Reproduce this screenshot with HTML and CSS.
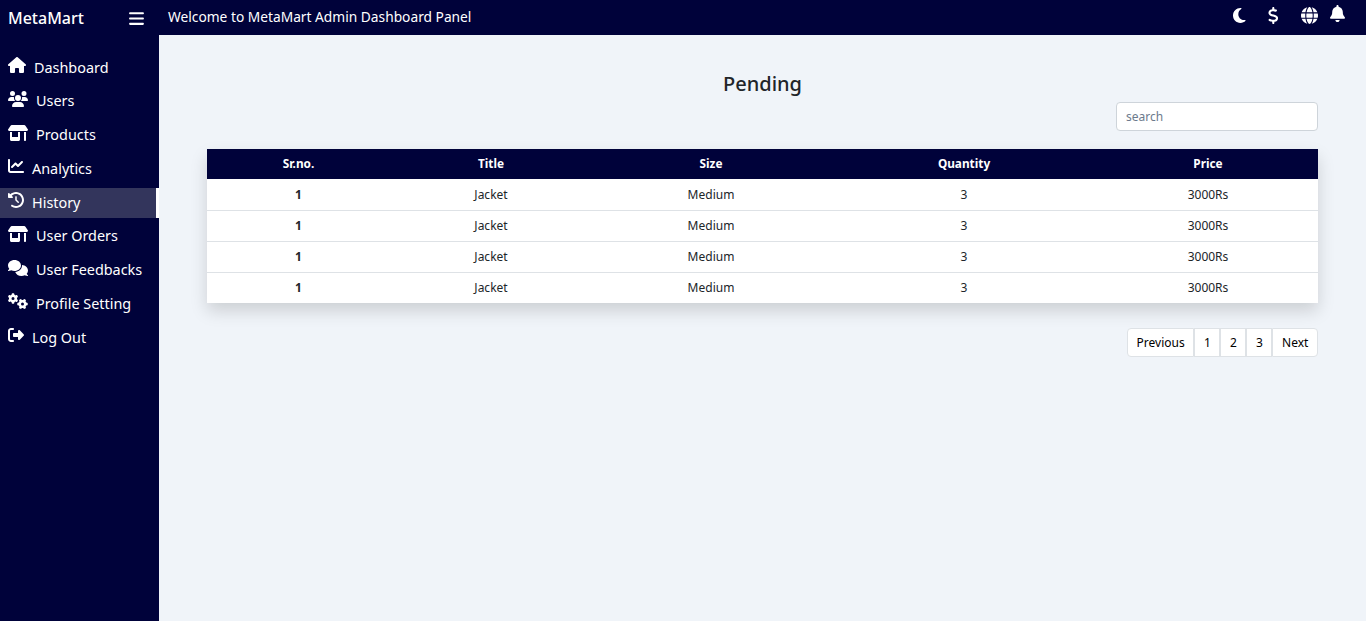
FILE: index.html
```html
<!DOCTYPE html>
<html lang="en">
<head>
  <meta charset="UTF-8">
  <title>MetaMart Admin</title>
  <link rel="stylesheet" href="styles.css">
</head>
<body>
<svg class="defs" aria-hidden="true">
  <symbol id="i-home" viewBox="0 0 576 512"><path d="M575.8 255.5c0 18-15 32.1-32 32.1h-32l.7 160.2c0 2.7-.2 5.4-.5 8.1V472c0 22.1-17.9 40-40 40H456c-1.1 0-2.2 0-3.3-.1c-1.4 .1-2.8 .1-4.2 .1H416 392c-22.1 0-40-17.9-40-40V448 384c0-17.7-14.3-32-32-32H256c-17.7 0-32 14.3-32 32v64 24c0 22.1-17.9 40-40 40H160 128.1c-1.5 0-3-.1-4.5-.2c-1.2 .1-2.4 .2-3.6 .2H104c-22.1 0-40-17.9-40-40V360c0-.9 0-1.9 .1-2.8V287.6H32c-18 0-32-14-32-32.1c0-9 3-17 10-24L266.4 8c7-7 15-8 22-8s15 2 21 7L564.8 231.5c8 7 12 15 11 24z"/></symbol>
  <symbol id="i-users" viewBox="0 0 640 512"><path d="M144 0a80 80 0 1 1 0 160A80 80 0 1 1 144 0zM512 0a80 80 0 1 1 0 160A80 80 0 1 1 512 0zM0 298.7C0 239.8 47.8 192 106.7 192h42.7c15.9 0 31 3.5 44.6 9.7c-1.3 7.2-1.9 14.7-1.9 22.3c0 38.2 16.8 72.5 43.3 96c-.2 0-.4 0-.7 0H21.3C9.6 320 0 310.4 0 298.7zM405.3 320c-.2 0-.4 0-.7 0c26.6-23.5 43.3-57.8 43.3-96c0-7.6-.7-15-1.9-22.3c13.6-6.3 28.7-9.7 44.6-9.7h42.7C592.2 192 640 239.8 640 298.7c0 11.8-9.6 21.3-21.3 21.3H405.3zM224 224a96 96 0 1 1 192 0 96 96 0 1 1 -192 0zM128 485.3C128 411.7 187.7 352 261.3 352H378.7C452.3 352 512 411.7 512 485.3c0 14.7-11.9 26.7-26.7 26.7H154.7c-14.7 0-26.7-11.9-26.7-26.7z"/></symbol>
  <symbol id="i-store" viewBox="0 0 640 512"><path d="M36.8 192H603.2c20.3 0 36.8-16.5 36.8-36.8c0-7.3-2.2-14.4-6.2-20.4L558.2 21.4C549.3 8 534.4 0 518.3 0H121.7c-16 0-31 8-39.9 21.4L6.2 134.7c-4 6.1-6.2 13.2-6.2 20.4C0 175.5 16.5 192 36.8 192zM64 224V384v80c0 26.5 21.5 48 48 48H336c26.5 0 48-21.5 48-48V384 224H320V384H128V224H64zm448 0V480c0 17.7 14.3 32 32 32s32-14.3 32-32V224H512z"/></symbol>
  <symbol id="i-chart" viewBox="0 0 512 512"><path d="M64 64c0-17.7-14.3-32-32-32S0 46.3 0 64V400c0 44.2 35.8 80 80 80H480c17.7 0 32-14.3 32-32s-14.3-32-32-32H80c-8.8 0-16-7.2-16-16V64zm406.6 86.6c12.5-12.5 12.5-32.8 0-45.3s-32.8-12.5-45.3 0L320 210.7l-57.4-57.4c-12.5-12.5-32.8-12.5-45.3 0l-112 112c-12.5 12.5-12.5 32.8 0 45.3s32.8 12.5 45.3 0L240 221.3l57.4 57.4c12.5 12.5 32.8 12.5 45.3 0l128-128z"/></symbol>
  <symbol id="i-history" viewBox="0 0 512 512"><path d="M75 75L41 41C25.9 25.9 0 36.6 0 57.9V168c0 13.3 10.7 24 24 24H134.1c21.4 0 32.1-25.9 17-41l-30.8-30.8C155 85.5 203 64 256 64c106 0 192 86 192 192s-86 192-192 192c-40.8 0-78.6-12.7-109.7-34.4c-14.5-10.1-34.4-6.6-44.6 7.9s-6.6 34.4 7.9 44.6C151.2 495 201.7 512 256 512c141.4 0 256-114.6 256-256S397.4 0 256 0C185.3 0 121.3 28.7 75 75zm181 53c-13.3 0-24 10.7-24 24V256c0 6.4 2.5 12.5 7 17l72 72c9.4 9.4 24.6 9.4 33.9 0s9.4-24.6 0-33.9l-65-65V152c0-13.3-10.7-24-24-24z"/></symbol>
  <symbol id="i-comments" viewBox="0 0 640 512"><path d="M208 352c114.9 0 208-78.8 208-176S322.9 0 208 0S0 78.8 0 176c0 38.6 14.7 74.3 39.6 103.4c-3.5 9.4-8.7 17.7-14.2 24.7c-4.8 6.2-9.7 11-13.3 14.3c-1.8 1.6-3.3 2.9-4.3 3.7c-.5 .4-.9 .7-1.1 .8l-.2 .2 0 0 0 0C1 327.2-1.4 334.4 .8 340.9S9.1 352 16 352c21.8 0 43.8-5.6 62.1-12.5c9.2-3.5 17.8-7.4 25.3-11.4C134.1 343.3 169.8 352 208 352zM448 176c0 112.3-99.1 196.9-216.5 207C255.8 457.4 336.4 512 432 512c38.2 0 73.9-8.7 104.7-23.9c7.5 4 16 7.9 25.2 11.4c18.3 6.9 40.3 12.5 62.1 12.5c6.9 0 13.1-4.5 15.2-11.1c2.1-6.6-.2-13.8-5.8-17.9l0 0 0 0-.2-.2c-.2-.2-.6-.4-1.1-.8c-1-.8-2.5-2-4.3-3.7c-3.6-3.3-8.5-8.1-13.3-14.3c-5.5-7-10.7-15.4-14.2-24.7c24.9-29 39.6-64.7 39.6-103.4c0-92.8-84.9-168.9-192.6-175.5c.4 5.1 .6 10.3 .6 15.5z"/></symbol>
  <symbol id="i-cogs" viewBox="0 0 640 512"><path d="M308.5 135.3c7.1-6.3 9.9-16.2 6.2-25c-2.3-5.3-4.8-10.5-7.6-15.5L304 89.4c-3-5-6.3-9.9-9.8-14.6c-5.7-7.6-15.7-10.1-24.7-7.1l-28.2 9.3c-10.7-8.8-23-16-36.2-20.9L199 27.1c-1.9-9.3-9.1-16.7-18.5-17.8C173.9 8.4 167.2 8 160.4 8h-.7c-6.8 0-13.5 .4-20.1 1.2c-9.4 1.1-16.6 8.6-18.5 17.8L115 56.1c-13.3 5-25.5 12.1-36.2 20.9L50.5 67.8c-9-3-19-.5-24.7 7.1c-3.5 4.7-6.8 9.6-9.9 14.6l-3 5.3c-2.8 5-5.3 10.2-7.6 15.6c-3.7 8.7-.9 18.6 6.2 25l22.2 19.8C32.6 161.9 32 168.9 32 176s.6 14.1 1.7 20.9L11.5 216.7c-7.1 6.3-9.9 16.2-6.2 25c2.3 5.3 4.8 10.5 7.6 15.6l3 5.2c3 5.1 6.3 9.9 9.9 14.6c5.7 7.6 15.7 10.1 24.7 7.1l28.2-9.3c10.7 8.8 23 16 36.2 20.9l6.1 29.1c1.9 9.3 9.1 16.7 18.5 17.8c6.7 .8 13.5 1.2 20.4 1.2s13.7-.4 20.4-1.2c9.4-1.1 16.6-8.6 18.5-17.8l6.1-29.1c13.3-5 25.5-12.1 36.2-20.9l28.2 9.3c9 3 19 .5 24.7-7.1c3.5-4.7 6.8-9.5 9.8-14.6l3.1-5.4c2.8-5 5.3-10.2 7.6-15.5c3.7-8.7 .9-18.6-6.2-25l-22.2-19.8c1.1-6.8 1.7-13.8 1.7-20.9s-.6-14.1-1.7-20.9l22.2-19.8zM112 176a48 48 0 1 1 96 0 48 48 0 1 1 -96 0zM504.7 500.5c6.3 7.1 16.2 9.9 25 6.2c5.3-2.3 10.5-4.8 15.5-7.6l5.4-3.1c5-3 9.9-6.3 14.6-9.8c7.6-5.7 10.1-15.7 7.1-24.7l-9.3-28.2c8.8-10.7 16-23 20.9-36.2l29.1-6.1c9.3-1.9 16.7-9.1 17.8-18.5c.8-6.7 1.2-13.5 1.2-20.4s-.4-13.7-1.2-20.4c-1.1-9.4-8.6-16.6-17.8-18.5L583.9 307c-5-13.3-12.1-25.5-20.9-36.2l9.3-28.2c3-9 .5-19-7.1-24.7c-4.7-3.5-9.6-6.8-14.6-9.9l-5.3-3c-5-2.8-10.2-5.3-15.6-7.6c-8.7-3.7-18.6-.9-25 6.2l-19.8 22.2c-6.8-1.1-13.8-1.7-20.9-1.7s-14.1 .6-20.9 1.7l-19.8-22.2c-6.3-7.1-16.2-9.9-25-6.2c-5.3 2.3-10.5 4.8-15.6 7.6l-5.2 3c-5.1 3-9.9 6.3-14.6 9.9c-7.6 5.7-10.1 15.7-7.1 24.7l9.3 28.2c-8.8 10.7-16 23-20.9 36.2L315.1 313c-9.3 1.9-16.7 9.1-17.8 18.5c-.8 6.7-1.2 13.5-1.2 20.4s.4 13.7 1.2 20.4c1.1 9.4 8.6 16.6 17.8 18.5l29.1 6.1c5 13.3 12.1 25.5 20.9 36.2l-9.3 28.2c-3 9-.5 19 7.1 24.7c4.7 3.5 9.5 6.8 14.6 9.8l5.4 3.1c5 2.8 10.2 5.3 15.5 7.6c8.7 3.7 18.6 .9 25-6.2l19.8-22.2c6.8 1.1 13.8 1.7 20.9 1.7s14.1-.6 20.9-1.7l19.8 22.2zM464 304a48 48 0 1 1 0 96 48 48 0 1 1 0-96z"/></symbol>
  <symbol id="i-logout" viewBox="0 0 512 512"><path d="M377.9 105.9L500.7 228.7c7.2 7.2 11.3 17.1 11.3 27.3s-4.1 20.1-11.3 27.3L377.9 406.1c-6.4 6.4-15 9.9-24 9.9c-18.7 0-33.9-15.2-33.9-33.9l0-62.1-128 0c-17.7 0-32-14.3-32-32l0-64c0-17.7 14.3-32 32-32l128 0 0-62.1c0-18.7 15.2-33.9 33.9-33.9c9 0 17.6 3.6 24 9.9zM160 96L96 96c-17.7 0-32 14.3-32 32l0 256c0 17.7 14.3 32 32 32l64 0c17.7 0 32 14.3 32 32s-14.3 32-32 32l-64 0c-53 0-96-43-96-96L0 128C0 75 43 32 96 32l64 0c17.7 0 32 14.3 32 32s-14.3 32-32 32z"/></symbol>
  <symbol id="i-bars" viewBox="0 0 448 512"><path d="M0 96C0 78.3 14.3 64 32 64H416c17.7 0 32 14.3 32 32s-14.3 32-32 32H32C14.3 128 0 113.7 0 96zM0 256c0-17.7 14.3-32 32-32H416c17.7 0 32 14.3 32 32s-14.3 32-32 32H32c-17.7 0-32-14.3-32-32zM448 416c0 17.7-14.3 32-32 32H32c-17.7 0-32-14.3-32-32s14.3-32 32-32H416c17.7 0 32 14.3 32 32z"/></symbol>
  <symbol id="i-moon" viewBox="0 0 384 512"><path d="M223.5 32C100 32 0 132.3 0 256S100 480 223.5 480c60.6 0 115.5-24.2 155.8-63.4c5-4.9 6.3-12.5 3.1-18.7s-10.1-9.7-17-8.5c-9.8 1.7-19.8 2.6-30.1 2.6c-96.9 0-175.5-78.8-175.5-176c0-65.8 36-123.1 89.3-153.3c6.1-3.5 9.2-10.5 7.7-17.3s-7.3-11.9-14.3-12.5c-6.3-.5-12.6-.8-19-.8z"/></symbol>
  <symbol id="i-dollar" viewBox="0 0 320 512"><path d="M160 0c17.7 0 32 14.3 32 32V67.7c1.6 .2 3.1 .4 4.7 .7c.4 .1 .7 .1 1.1 .2l48 8.8c17.4 3.2 28.9 19.9 25.7 37.2s-19.9 28.9-37.2 25.7l-47.5-8.7c-31.3-4.6-58.9-1.5-78.3 6.2s-27.2 18.3-29 28.1c-2 10.7-.5 16.7 1.2 20.4c1.8 3.9 5.5 8.3 12.8 13.2c16.3 10.7 41.3 17.7 73.7 26.3l2.9 .8c28.6 7.6 63.6 16.8 89.6 33.8c14.2 9.3 27.6 21.9 35.9 39.5c8.5 17.9 10.3 37.9 6.4 59.2c-6.9 38-33.1 63.4-65.6 76.7c-13.7 5.6-28.6 9.2-44.4 11V480c0 17.7-14.3 32-32 32s-32-14.3-32-32V445.1c-.4-.1-.9-.1-1.3-.2l-.2 0 0 0c-24.4-3.8-64.5-14.3-91.5-26.3c-16.1-7.2-23.4-26.1-16.2-42.2s26.1-23.4 42.2-16.2c20.9 9.3 55.3 18.5 75.2 21.6c31.9 4.7 58.2 2 76-5.3c16.9-6.9 24.6-16.9 26.8-28.9c1.9-10.6 .4-16.7-1.3-20.4c-1.9-4-5.6-8.4-13-13.3c-16.4-10.7-41.5-17.7-74-26.3l-2.8-.7 0 0C119.4 279.3 84.4 270 58.4 253c-14.2-9.3-27.5-22-35.8-39.6c-8.4-17.9-10.1-37.9-6.1-59.2C23.7 116 52.3 91.2 84.8 78.3c13.3-5.3 27.9-8.9 43.2-11V32c0-17.7 14.3-32 32-32z"/></symbol>
  <symbol id="i-globe" viewBox="0 0 512 512"><path d="M352 256c0 22.2-1.2 43.6-3.3 64H163.3c-2.2-20.4-3.3-41.8-3.3-64s1.2-43.6 3.3-64H348.7c2.2 20.4 3.3 41.8 3.3 64zm28.8-64H503.9c5.3 20.5 8.1 41.9 8.1 64s-2.8 43.5-8.1 64H380.8c2.1-20.6 3.2-42 3.2-64s-1.1-43.4-3.2-64zm112.6-32H376.7c-10-63.9-29.8-117.4-55.3-151.6c78.3 20.7 142 77.5 171.9 151.6zm-149.1 0H167.7c6.1-36.4 15.5-68.6 27-94.7c10.5-23.6 22.2-40.7 33.5-51.5C239.4 3.2 248.7 0 256 0s16.6 3.2 27.8 13.8c11.3 10.8 23 27.9 33.5 51.5c11.6 26 20.9 58.2 27 94.7zm-209 0H18.6C48.6 85.9 112.2 29.1 190.6 8.4C165.1 42.6 145.3 96.1 135.3 160zM8.1 192H131.2c-2.1 20.6-3.2 42-3.2 64s1.1 43.4 3.2 64H8.1C2.8 299.5 0 278.1 0 256s2.8-43.5 8.1-64zM194.7 446.6c-11.6-26-20.9-58.2-27-94.6H344.3c-6.1 36.4-15.5 68.6-27 94.6c-10.5 23.6-22.2 40.7-33.5 51.5C272.6 508.8 263.3 512 256 512s-16.6-3.2-27.8-13.8c-11.3-10.8-23-27.9-33.5-51.5zM135.3 352c10 63.9 29.8 117.4 55.3 151.6C112.2 482.9 48.6 426.1 18.6 352H135.3zm358.1 0c-30 74.1-93.6 130.9-171.9 151.6c25.5-34.2 45.2-87.7 55.3-151.6H493.4z"/></symbol>
  <symbol id="i-bell" viewBox="0 0 448 512"><path d="M224 0c-17.7 0-32 14.3-32 32V51.2C119 66 64 130.6 64 208v18.8c0 47-17.3 92.4-48.5 127.6l-7.4 8.3c-8.4 9.4-10.4 22.9-5.3 34.4S19.4 416 32 416H416c12.6 0 24-7.4 29.2-18.9s3.1-25-5.3-34.4l-7.4-8.3C401.3 319.2 384 273.9 384 226.8V208c0-77.4-55-142-128-156.8V32c0-17.7-14.3-32-32-32zm45.3 493.3c12-12 18.7-28.3 18.7-45.3H224 160c0 17 6.7 33.3 18.7 45.3s28.3 18.7 45.3 18.7s33.3-6.7 45.3-18.7z"/></symbol>
</svg>

<div class="app">
  <aside class="sidebar">
    <div class="brand">
      <span class="logo">MetaMart</span>
      <svg class="bars"><use href="#i-bars"/></svg>
    </div>
    <nav class="menu">
      <a class="item"><svg class="ico w18"><use href="#i-home"/></svg><span>Dashboard</span></a>
      <a class="item"><svg class="ico w20"><use href="#i-users"/></svg><span>Users</span></a>
      <a class="item"><svg class="ico w20"><use href="#i-store"/></svg><span>Products</span></a>
      <a class="item"><svg class="ico w16"><use href="#i-chart"/></svg><span>Analytics</span></a>
      <a class="item active"><svg class="ico w16"><use href="#i-history"/></svg><span>History</span></a>
      <a class="item"><svg class="ico w20"><use href="#i-store"/></svg><span>User Orders</span></a>
      <a class="item"><svg class="ico w20"><use href="#i-comments"/></svg><span>User Feedbacks</span></a>
      <a class="item"><svg class="ico w20"><use href="#i-cogs"/></svg><span>Profile Setting</span></a>
      <a class="item"><svg class="ico w16"><use href="#i-logout"/></svg><span>Log Out</span></a>
    </nav>
  </aside>

  <div class="right">
    <header class="topbar">
      <span class="welcome">Welcome to MetaMart Admin Dashboard Panel</span>
      <div class="top-icons">
        <svg class="t-moon"><use href="#i-moon"/></svg>
        <svg class="t-dollar"><use href="#i-dollar"/></svg>
        <svg class="t-globe"><use href="#i-globe"/></svg>
        <svg class="t-bell"><use href="#i-bell"/></svg>
      </div>
    </header>

    <main class="content">
      <h2 class="title">Pending</h2>
      <div class="search-row">
        <input class="search" type="text" placeholder="search">
      </div>
      <table class="tbl">
        <colgroup>
          <col class="c1"><col class="c2"><col class="c3"><col class="c4"><col class="c5">
        </colgroup>
        <thead>
          <tr><th>Sr.no.</th><th>Title</th><th>Size</th><th>Quantity</th><th>Price</th></tr>
        </thead>
        <tbody>
          <tr><td class="num">1</td><td>Jacket</td><td>Medium</td><td>3</td><td>3000Rs</td></tr>
          <tr><td class="num">1</td><td>Jacket</td><td>Medium</td><td>3</td><td>3000Rs</td></tr>
          <tr><td class="num">1</td><td>Jacket</td><td>Medium</td><td>3</td><td>3000Rs</td></tr>
          <tr><td class="num">1</td><td>Jacket</td><td>Medium</td><td>3</td><td>3000Rs</td></tr>
        </tbody>
      </table>
      <div class="pager">
        <a class="pg">Previous</a>
        <a class="pg">1</a>
        <a class="pg">2</a>
        <a class="pg">3</a>
        <a class="pg">Next</a>
      </div>
    </main>
  </div>
</div>
</body>
</html>
```

FILE: styles.css
```css
* {
  box-sizing: border-box;
}

html,
body {
  margin: 0;
  padding: 0;
  height: 100%;
}

body {
  font-family: "Noto Sans", "Open Sans", sans-serif;
  font-size: 12px;
  color: #212529;
  background: #f0f4f9;
}

.defs {
  display: none;
}

svg {
  fill: currentColor;
  flex: none;
}

.app {
  display: flex;
  height: 621px;
  overflow: hidden;
}

/* sidebar */
.sidebar {
  width: 159px;
  flex: none;
  background: #00023a;
  color: #fff;
}

.brand {
  height: 35px;
  display: flex;
  align-items: center;
  justify-content: space-between;
  padding: 0 15px 0 8px;
}

.logo {
  font-size: 16px;
  font-weight: 500;
}

.bars {
  width: 15px;
  height: 17px;
  margin-top: 2.6px;
}

.menu {
  display: flex;
  flex-direction: column;
  gap: 3.75px;
  padding-top: 18px;
}

.item {
  height: 30px;
  display: flex;
  align-items: center;
  gap: 8px;
  padding-left: 8px;
  font-size: 14.4px;
}

.item span {
  padding-bottom: 2px;
}

.item svg {
  margin-top: -6px;
}

.item.active {
  background: #33355c;
  border-right: 3px solid #fff;
}

.ico {
  height: 16px;
}

.w16 {
  width: 16px;
}

.w18 {
  width: 18px;
}

.w20 {
  width: 20px;
}

/* top bar */
.right {
  flex: 1;
  min-width: 0;
  display: flex;
  flex-direction: column;
}

.topbar {
  height: 35px;
  flex: none;
  background: #00023a;
  color: #fff;
  display: flex;
  align-items: center;
  justify-content: space-between;
  padding: 0 20.8px 0 9px;
}

.welcome {
  font-size: 13.75px;
  padding-bottom: 2px;
}

.top-icons {
  display: flex;
  align-items: center;
  margin-top: -5px;
}

.top-icons svg {
  height: 17px;
}

.t-moon {
  width: 12.75px;
}

.t-dollar {
  width: 10.6px;
  margin-left: 21.5px;
}

.t-globe {
  width: 17px;
  margin-left: 22.7px;
}

.t-bell {
  width: 15px;
  margin-left: 12.3px;
  margin-top: -3px;
}

/* main */
.content {
  flex: 1;
  padding: 35px 48px 0;
}

.title {
  margin: 0;
  height: 28px;
  line-height: 28px;
  text-align: center;
  font-size: 20px;
  font-weight: 500;
}

.search-row {
  display: flex;
  justify-content: flex-end;
  margin-top: 4px;
}

.search {
  width: 202px;
  height: 29px;
  padding: 0 9px;
  background: #fff;
  border: 1px solid #ced4da;
  border-radius: 4px;
  font-family: inherit;
  font-size: 12px;
  outline: none;
}

.search::placeholder {
  color: #6c7a8c;
}

.tbl {
  width: 1111px;
  margin-top: 18px;
  table-layout: fixed;
  border-collapse: collapse;
  background: #fff;
  box-shadow: 0 8px 16px rgba(0, 0, 0, .15);
}

.c1 { width: 183px; }
.c2 { width: 202px; }
.c3 { width: 238px; }
.c4 { width: 268px; }
.c5 { width: 220px; }

.tbl th {
  height: 30px;
  padding: 0 0 2px;
  background: #00023a;
  color: #fff;
  font-size: 11.8px;
  font-weight: 700;
  text-align: center;
}

.tbl td {
  height: 31px;
  padding: 0;
  text-align: center;
  border-bottom: 1px solid #dee2e6;
}

.tbl tr:last-child td {
  border-bottom: 0;
}

.tbl .num {
  font-weight: 700;
}

.pager {
  display: flex;
  justify-content: flex-end;
  margin-top: 25px;
}

.pg {
  height: 29px;
  line-height: 27px;
  padding: 0 8.6px;
  background: #fff;
  border: 1px solid #dee2e6;
  color: #000;
}

.pg:first-child {
  border-radius: 4px 0 0 4px;
}

.pg:last-child {
  border-radius: 0 4px 4px 0;
}
```
